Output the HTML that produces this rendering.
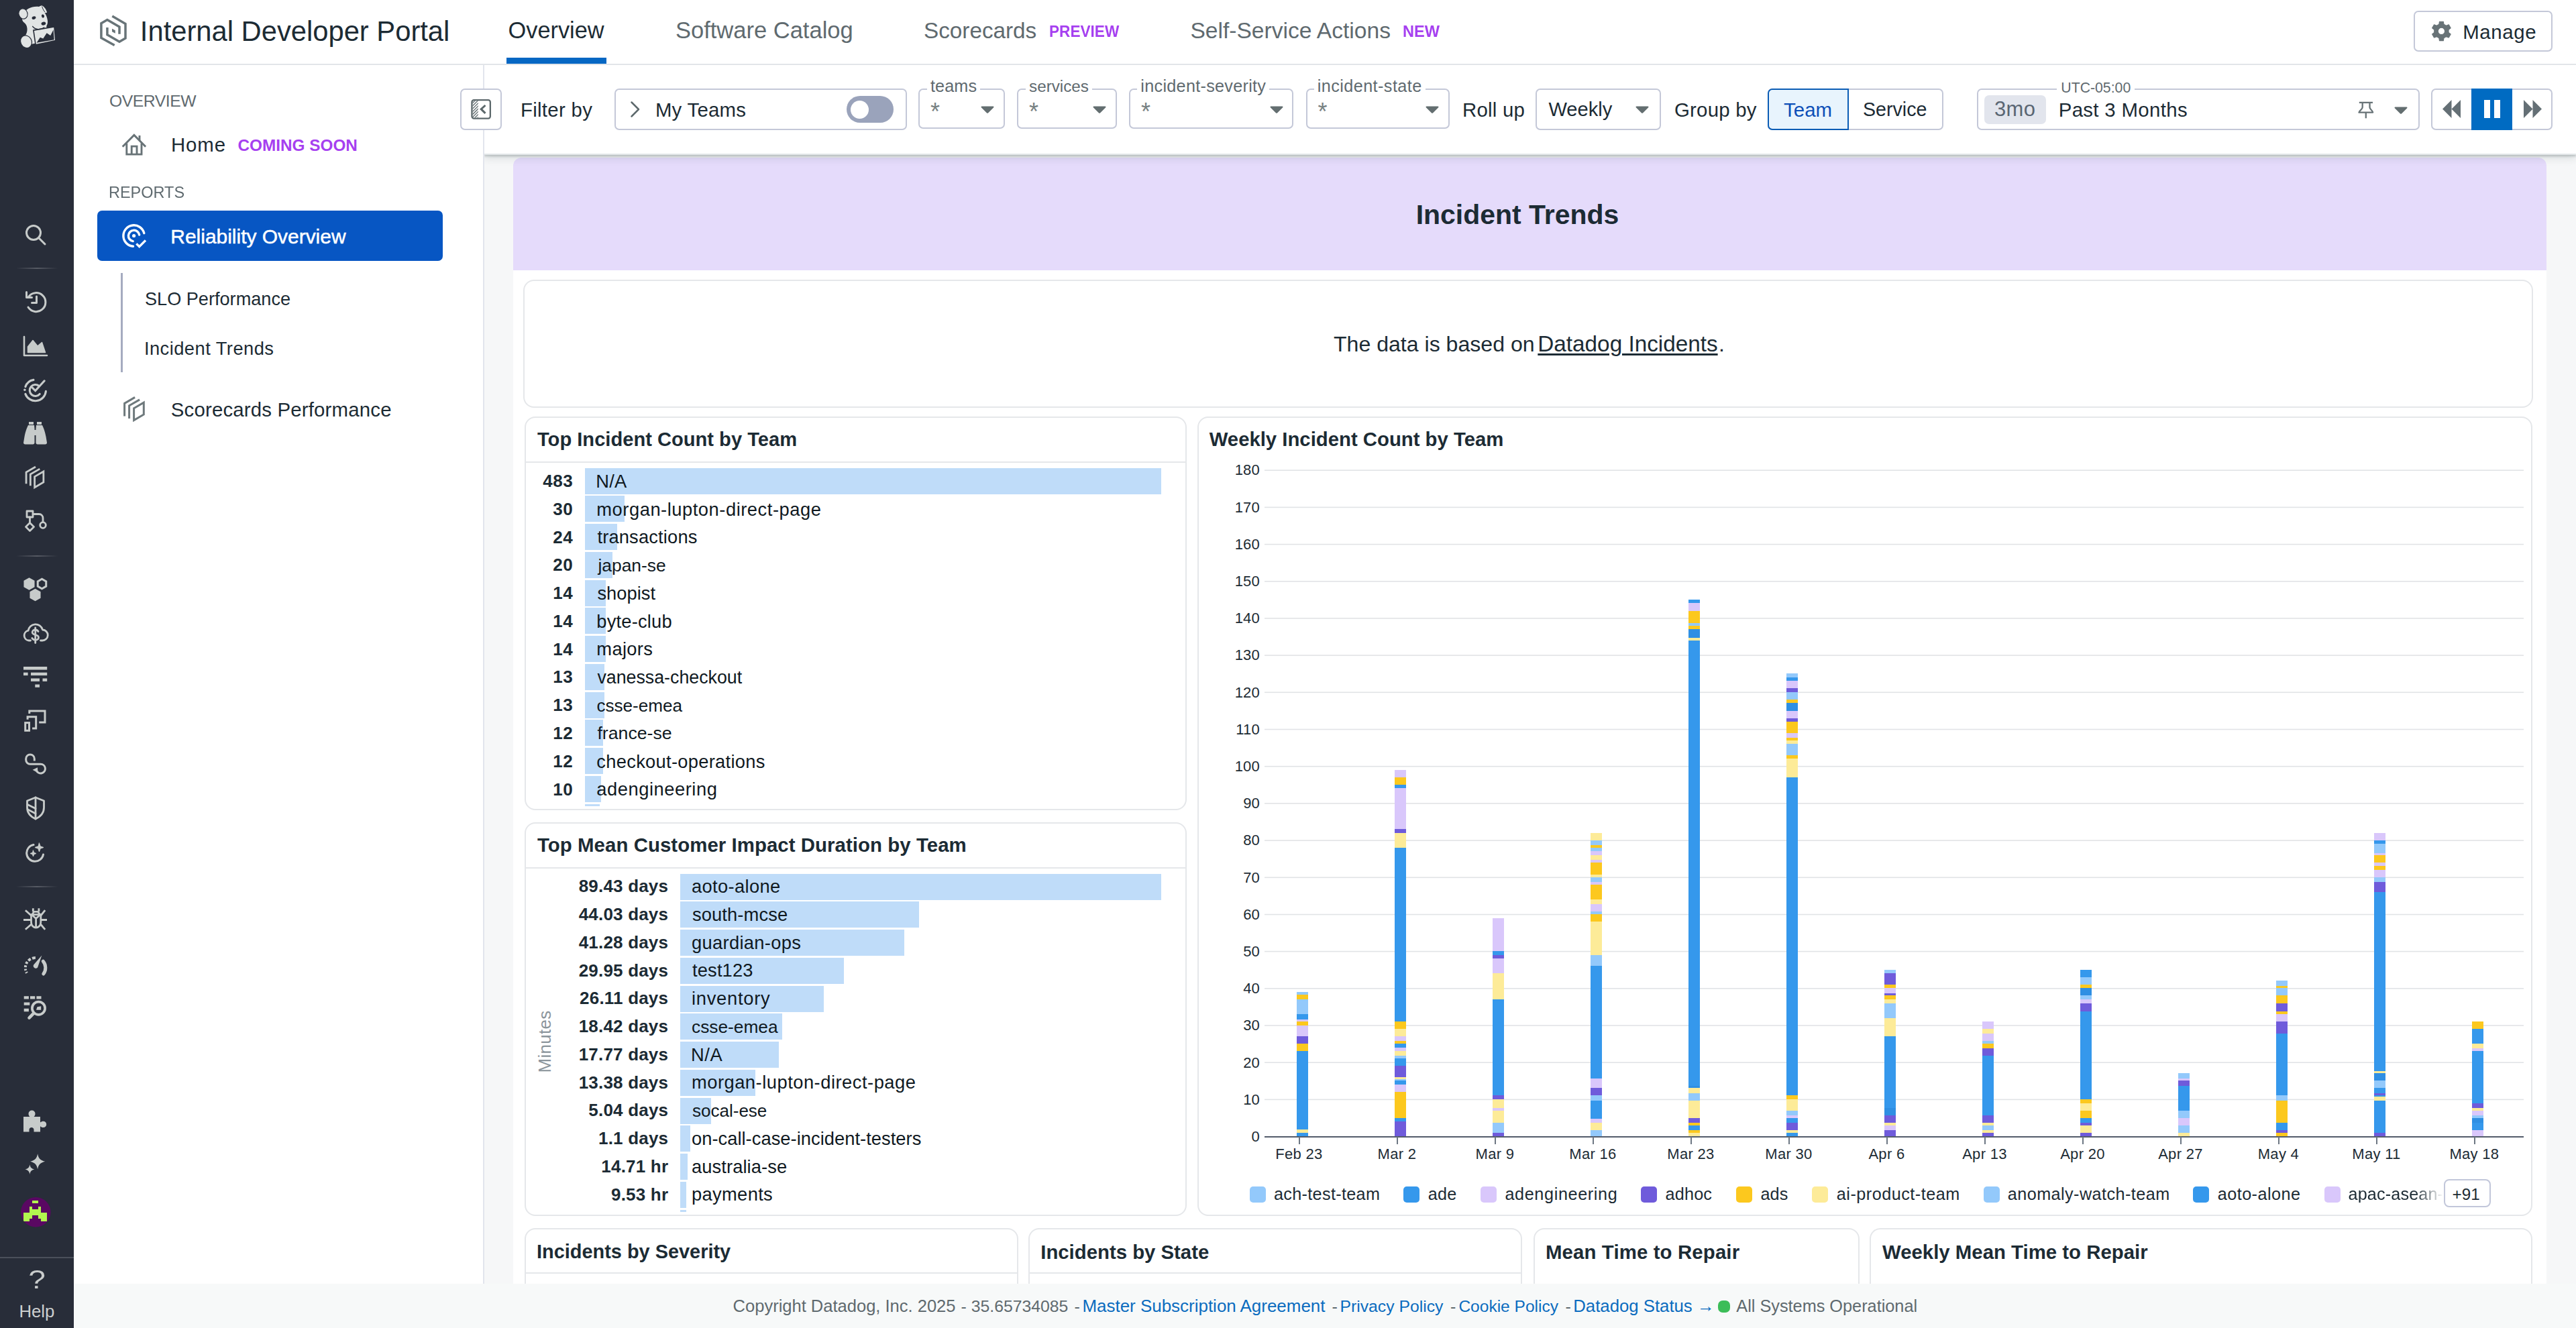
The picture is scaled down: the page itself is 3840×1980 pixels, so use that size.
<!DOCTYPE html>
<html lang="en"><head><meta charset="utf-8"><title>Internal Developer Portal - Reliability Overview</title>
<style>
html,body{margin:0;padding:0;}
body{width:100.000001vw;height:51.562501vw;overflow:hidden;position:relative;background:#f6f7f8;font-family:"Liberation Sans",sans-serif;}
.b{position:absolute;box-sizing:border-box;}
.t{position:absolute;white-space:nowrap;font-family:"Liberation Sans",sans-serif;}
svg{position:absolute;overflow:visible;}
a{color:inherit;}
</style></head>
<body>
<div class="b" style="left:18.802084vw;top:2.500001vw;width:81.197918vw;height:47.343751vw;background:#f6f7f8;"></div>
<div class="b" style="left:19.921876vw;top:6.114584vw;width:78.932293vw;height:44.270834vw;background:#fff;border-radius:0.312501vw 0.312501vw 0 0;"></div>
<div class="b" style="left:19.921876vw;top:6.114584vw;width:78.932293vw;height:4.375001vw;background:#e5dbfb;border-radius:0.312501vw 0.312501vw 0 0;"></div>
<div class="b" style="left:20.312501vw;top:10.859376vw;width:78.020834vw;height:4.973959vw;background:#fff;border:0.052084vw solid #e5e7ea;border-radius:0.416668vw;"></div>
<div class="b" style="left:20.364584vw;top:16.171876vw;width:25.703126vw;height:15.286459vw;background:#fff;border:0.052084vw solid #e5e7ea;border-radius:0.416668vw;"></div>
<div class="b" style="left:20.364584vw;top:17.916668vw;width:25.703126vw;height:0.052084vw;background:#e5e7ea;"></div>
<div class="b" style="left:46.484376vw;top:16.171876vw;width:51.822918vw;height:31.041668vw;background:#fff;border:0.052084vw solid #e5e7ea;border-radius:0.416668vw;"></div>
<div class="b" style="left:20.364584vw;top:31.927084vw;width:25.703126vw;height:15.286459vw;background:#fff;border:0.052084vw solid #e5e7ea;border-radius:0.416668vw;"></div>
<div class="b" style="left:20.364584vw;top:33.671876vw;width:25.703126vw;height:0.052084vw;background:#e5e7ea;"></div>
<div class="b" style="left:20.364584vw;top:47.682293vw;width:19.166668vw;height:5.208334vw;background:#fff;border:0.052084vw solid #e5e7ea;border-radius:0.416668vw;"></div>
<div class="b" style="left:20.364584vw;top:49.401043vw;width:19.166668vw;height:0.052084vw;background:#e5e7ea;"></div>
<div class="b" style="left:39.921876vw;top:47.682293vw;width:19.166668vw;height:5.208334vw;background:#fff;border:0.052084vw solid #e5e7ea;border-radius:0.416668vw;"></div>
<div class="b" style="left:39.921876vw;top:49.401043vw;width:19.166668vw;height:0.052084vw;background:#e5e7ea;"></div>
<div class="b" style="left:59.531251vw;top:47.682293vw;width:12.656251vw;height:5.208334vw;background:#fff;border:0.052084vw solid #e5e7ea;border-radius:0.416668vw;"></div>
<div class="b" style="left:72.578126vw;top:47.682293vw;width:25.729168vw;height:5.208334vw;background:#fff;border:0.052084vw solid #e5e7ea;border-radius:0.416668vw;"></div>
<div class="b" style="left:18.802084vw;top:2.500001vw;width:81.197918vw;height:3.515626vw;background:#fff;border:0 solid #e3e7e9;border-bottom-width:0.052084vw;box-shadow:0 0.052084vw 0.078126vw rgba(60,80,80,0.26),0 0.130209vw 0.312501vw rgba(40,60,60,0.16);"></div>
<div class="b" style="left:2.864584vw;top:2.500001vw;width:15.937501vw;height:47.343751vw;background:#fff;"></div>
<div class="b" style="left:18.750001vw;top:2.500001vw;width:0.052084vw;height:47.343751vw;background:#e2e5ed;"></div>
<div class="b" style="left:2.864584vw;top:0.000001vw;width:97.135418vw;height:2.500001vw;background:#fff;"></div>
<div class="b" style="left:2.864584vw;top:2.468751vw;width:97.135418vw;height:0.052084vw;background:#e2e5e9;"></div>
<div class="b" style="left:17.864584vw;top:3.437501vw;width:1.614584vw;height:1.614584vw;background:#fff;border:0.052084vw solid #c4c8d8;border-radius:0.182293vw;"></div>
<div class="b" style="left:23.854168vw;top:3.437501vw;width:11.354168vw;height:1.614584vw;background:#fff;border:0.052084vw solid #c4c8d8;border-radius:0.182293vw;"></div>
<div class="b" style="left:32.864584vw;top:3.723959vw;width:1.822918vw;height:1.041668vw;background:#9aa3bb;border-radius:0.520834vw;"></div>
<div class="b" style="left:33.007813vw;top:3.893230vw;width:0.703126vw;height:0.703126vw;background:#fff;border-radius:0.364584vw;"></div>
<div class="b" style="left:35.651043vw;top:3.437501vw;width:3.359376vw;height:1.549480vw;background:#fff;border:0.052084vw solid #c4c8d8;border-radius:0.182293vw;"></div>
<div class="b" style="left:39.479168vw;top:3.437501vw;width:3.880209vw;height:1.549480vw;background:#fff;border:0.052084vw solid #c4c8d8;border-radius:0.182293vw;"></div>
<div class="b" style="left:43.828126vw;top:3.437501vw;width:6.380209vw;height:1.549480vw;background:#fff;border:0.052084vw solid #c4c8d8;border-radius:0.182293vw;"></div>
<div class="b" style="left:50.703126vw;top:3.437501vw;width:5.572918vw;height:1.549480vw;background:#fff;border:0.052084vw solid #c4c8d8;border-radius:0.182293vw;"></div>
<div class="b" style="left:59.609376vw;top:3.437501vw;width:4.869793vw;height:1.614584vw;background:#fff;border:0.052084vw solid #c4c8d8;border-radius:0.182293vw;"></div>
<div class="b" style="left:68.619793vw;top:3.437501vw;width:6.822918vw;height:1.614584vw;background:#fff;border:0.052084vw solid #c4c8d8;border-radius:0.182293vw;"></div>
<div class="b" style="left:68.619793vw;top:3.437501vw;width:3.151043vw;height:1.614584vw;background:#e8f4fd;border:0.065105vw solid #0b5cb5;border-radius:0.182293vw 0 0 0.182293vw;"></div>
<div class="b" style="left:76.744793vw;top:3.437501vw;width:17.187501vw;height:1.614584vw;background:#fff;border:0.052084vw solid #c4c8d8;border-radius:0.182293vw;"></div>
<div class="b" style="left:77.031251vw;top:3.684897vw;width:2.395834vw;height:1.119793vw;background:#e2e5ed;border-radius:0.182293vw;"></div>
<div class="b" style="left:94.375001vw;top:3.437501vw;width:4.713543vw;height:1.614584vw;background:#fff;border:0.052084vw solid #c4c8d8;border-radius:0.182293vw;"></div>
<div class="b" style="left:95.937501vw;top:3.437501vw;width:1.588543vw;height:1.614584vw;background:#006bc2;"></div>
<div class="b" style="left:96.419272vw;top:3.880209vw;width:0.234376vw;height:0.703126vw;background:#fff;"></div>
<div class="b" style="left:96.809897vw;top:3.880209vw;width:0.234376vw;height:0.703126vw;background:#fff;"></div>
<div class="b" style="left:93.705730vw;top:0.421876vw;width:5.377605vw;height:1.575522vw;background:#fff;border:0.052084vw solid #c4c8d8;border-radius:0.182293vw;"></div>
<div class="b" style="left:19.661459vw;top:2.239584vw;width:3.880209vw;height:0.234376vw;background:#0667c3;"></div>
<div class="b" style="left:3.776043vw;top:8.177084vw;width:13.411459vw;height:1.953126vw;background:#0756c3;border-radius:0.182293vw;"></div>
<div class="b" style="left:4.687501vw;top:10.598959vw;width:0.078126vw;height:3.854168vw;background:#a5abc0;"></div>
<div class="b" style="left:2.864584vw;top:49.843751vw;width:97.135418vw;height:1.718751vw;background:#f7f9f9;"></div>
<div class="b" style="left:66.692709vw;top:50.481772vw;width:0.468751vw;height:0.468751vw;background:#3cbd58;border-radius:0.182293vw;"></div>
<div class="b" style="left:0.000001vw;top:0.000001vw;width:2.864584vw;height:51.562501vw;background:#282d39;"></div>
<div class="b" style="left:0.000001vw;top:48.802084vw;width:2.864584vw;height:0.052084vw;background:#4b505b;"></div>
<div class="b" style="left:0.625001vw;top:10.390626vw;width:1.614584vw;height:0.052084vw;background:linear-gradient(90deg,rgba(255,255,255,0),rgba(255,255,255,0.22),rgba(255,255,255,0));"></div>
<div class="b" style="left:0.625001vw;top:21.562501vw;width:1.614584vw;height:0.052084vw;background:linear-gradient(90deg,rgba(255,255,255,0),rgba(255,255,255,0.22),rgba(255,255,255,0));"></div>
<div class="b" style="left:0.625001vw;top:34.401043vw;width:1.614584vw;height:0.052084vw;background:linear-gradient(90deg,rgba(255,255,255,0),rgba(255,255,255,0.22),rgba(255,255,255,0));"></div>
<div class="b" style="left:22.708334vw;top:18.164063vw;width:22.369793vw;height:1.015626vw;background:#bfdcf9;"></div>
<div class="b" style="left:22.708334vw;top:19.250001vw;width:1.536459vw;height:1.015626vw;background:#bfdcf9;"></div>
<div class="b" style="left:22.708334vw;top:20.338543vw;width:1.260418vw;height:1.015626vw;background:#bfdcf9;"></div>
<div class="b" style="left:22.708334vw;top:21.427084vw;width:1.075522vw;height:1.015626vw;background:#bfdcf9;"></div>
<div class="b" style="left:22.708334vw;top:22.513022vw;width:0.799480vw;height:1.015626vw;background:#bfdcf9;"></div>
<div class="b" style="left:22.708334vw;top:23.598959vw;width:0.799480vw;height:1.015626vw;background:#bfdcf9;"></div>
<div class="b" style="left:22.708334vw;top:24.687501vw;width:0.799480vw;height:1.015626vw;background:#bfdcf9;"></div>
<div class="b" style="left:22.708334vw;top:25.776043vw;width:0.755209vw;height:1.015626vw;background:#bfdcf9;"></div>
<div class="b" style="left:22.708334vw;top:26.861980vw;width:0.755209vw;height:1.015626vw;background:#bfdcf9;"></div>
<div class="b" style="left:22.708334vw;top:27.947918vw;width:0.708334vw;height:1.015626vw;background:#bfdcf9;"></div>
<div class="b" style="left:22.708334vw;top:29.036459vw;width:0.708334vw;height:1.015626vw;background:#bfdcf9;"></div>
<div class="b" style="left:22.708334vw;top:30.125001vw;width:0.617188vw;height:1.015626vw;background:#bfdcf9;"></div>
<div class="b" style="left:22.708334vw;top:31.213543vw;width:0.572918vw;height:0.078126vw;background:#bfdcf9;"></div>
<div class="b" style="left:26.406251vw;top:33.919272vw;width:18.671876vw;height:1.015626vw;background:#bfdcf9;"></div>
<div class="b" style="left:26.406251vw;top:35.005209vw;width:9.270834vw;height:1.015626vw;background:#bfdcf9;"></div>
<div class="b" style="left:26.406251vw;top:36.093751vw;width:8.703126vw;height:1.015626vw;background:#bfdcf9;"></div>
<div class="b" style="left:26.406251vw;top:37.182293vw;width:6.356772vw;height:1.015626vw;background:#bfdcf9;"></div>
<div class="b" style="left:26.406251vw;top:38.268230vw;width:5.562501vw;height:1.015626vw;background:#bfdcf9;"></div>
<div class="b" style="left:26.406251vw;top:39.354168vw;width:3.968751vw;height:1.015626vw;background:#bfdcf9;"></div>
<div class="b" style="left:26.406251vw;top:40.442709vw;width:3.835939vw;height:1.015626vw;background:#bfdcf9;"></div>
<div class="b" style="left:26.406251vw;top:41.531251vw;width:2.927084vw;height:1.015626vw;background:#bfdcf9;"></div>
<div class="b" style="left:26.406251vw;top:42.617188vw;width:1.200522vw;height:1.015626vw;background:#bfdcf9;"></div>
<div class="b" style="left:26.406251vw;top:43.703126vw;width:0.382813vw;height:1.015626vw;background:#bfdcf9;"></div>
<div class="b" style="left:26.406251vw;top:44.791668vw;width:0.283855vw;height:1.015626vw;background:#bfdcf9;"></div>
<div class="b" style="left:26.406251vw;top:45.880209vw;width:0.239584vw;height:1.015626vw;background:#bfdcf9;"></div>
<div class="b" style="left:26.406251vw;top:46.966147vw;width:0.234376vw;height:0.078126vw;background:#bfdcf9;"></div>
<svg style="left:0;top:0;width:100.000001vw;height:51.562501vw" viewBox="0 0 3840 1980" shape-rendering="crispEdges"><rect x="1885" y="1638.6" width="1877" height="1.600" fill="#e1e3e6" shape-rendering="geometricPrecision"/><rect x="1885" y="1583.4" width="1877" height="1.600" fill="#e1e3e6" shape-rendering="geometricPrecision"/><rect x="1885" y="1528.2" width="1877" height="1.600" fill="#e1e3e6" shape-rendering="geometricPrecision"/><rect x="1885" y="1473.0" width="1877" height="1.600" fill="#e1e3e6" shape-rendering="geometricPrecision"/><rect x="1885" y="1417.8" width="1877" height="1.600" fill="#e1e3e6" shape-rendering="geometricPrecision"/><rect x="1885" y="1362.7" width="1877" height="1.600" fill="#e1e3e6" shape-rendering="geometricPrecision"/><rect x="1885" y="1307.5" width="1877" height="1.600" fill="#e1e3e6" shape-rendering="geometricPrecision"/><rect x="1885" y="1252.3" width="1877" height="1.600" fill="#e1e3e6" shape-rendering="geometricPrecision"/><rect x="1885" y="1197.1" width="1877" height="1.600" fill="#e1e3e6" shape-rendering="geometricPrecision"/><rect x="1885" y="1141.9" width="1877" height="1.600" fill="#e1e3e6" shape-rendering="geometricPrecision"/><rect x="1885" y="1086.7" width="1877" height="1.600" fill="#e1e3e6" shape-rendering="geometricPrecision"/><rect x="1885" y="1031.5" width="1877" height="1.600" fill="#e1e3e6" shape-rendering="geometricPrecision"/><rect x="1885" y="976.3" width="1877" height="1.600" fill="#e1e3e6" shape-rendering="geometricPrecision"/><rect x="1885" y="921.1" width="1877" height="1.600" fill="#e1e3e6" shape-rendering="geometricPrecision"/><rect x="1885" y="866.0" width="1877" height="1.600" fill="#e1e3e6" shape-rendering="geometricPrecision"/><rect x="1885" y="810.8" width="1877" height="1.600" fill="#e1e3e6" shape-rendering="geometricPrecision"/><rect x="1885" y="755.6" width="1877" height="1.600" fill="#e1e3e6" shape-rendering="geometricPrecision"/><rect x="1885" y="700.4" width="1877" height="1.600" fill="#e1e3e6" shape-rendering="geometricPrecision"/><rect x="1932.5" y="1688.68" width="17" height="5.52" fill="#3598ec"/><rect x="1932.5" y="1684.27" width="17" height="4.42" fill="#fdeb98"/><rect x="1932.5" y="1567.26" width="17" height="117.00" fill="#3598ec"/><rect x="1932.5" y="1556.23" width="17" height="11.04" fill="#fcc81e"/><rect x="1932.5" y="1545.19" width="17" height="11.04" fill="#6f5bdb"/><rect x="1932.5" y="1528.63" width="17" height="16.56" fill="#d9c7fb"/><rect x="1932.5" y="1523.11" width="17" height="5.52" fill="#fcc81e"/><rect x="1932.5" y="1519.80" width="17" height="3.31" fill="#d9c7fb"/><rect x="1932.5" y="1512.07" width="17" height="7.73" fill="#3598ec"/><rect x="1932.5" y="1490.00" width="17" height="22.08" fill="#93c9fb"/><rect x="1932.5" y="1482.82" width="17" height="7.17" fill="#fcc81e"/><rect x="1932.5" y="1478.96" width="17" height="3.86" fill="#93c9fb"/><rect x="2078.5" y="1672.12" width="17" height="22.08" fill="#6f5bdb"/><rect x="2078.5" y="1666.61" width="17" height="5.52" fill="#3598ec"/><rect x="2078.5" y="1627.97" width="17" height="38.63" fill="#fcc81e"/><rect x="2078.5" y="1616.93" width="17" height="11.04" fill="#d9c7fb"/><rect x="2078.5" y="1611.41" width="17" height="5.52" fill="#3598ec"/><rect x="2078.5" y="1608.66" width="17" height="2.76" fill="#93c9fb"/><rect x="2078.5" y="1605.90" width="17" height="2.76" fill="#fdeb98"/><rect x="2078.5" y="1589.34" width="17" height="16.56" fill="#6f5bdb"/><rect x="2078.5" y="1578.30" width="17" height="11.04" fill="#3598ec"/><rect x="2078.5" y="1574.44" width="17" height="3.86" fill="#93c9fb"/><rect x="2078.5" y="1567.26" width="17" height="7.17" fill="#fdeb98"/><rect x="2078.5" y="1561.74" width="17" height="5.52" fill="#d9c7fb"/><rect x="2078.5" y="1556.23" width="17" height="5.52" fill="#3598ec"/><rect x="2078.5" y="1552.36" width="17" height="3.86" fill="#fcc81e"/><rect x="2078.5" y="1545.19" width="17" height="7.17" fill="#d9c7fb"/><rect x="2078.5" y="1534.15" width="17" height="11.04" fill="#fdeb98"/><rect x="2078.5" y="1523.11" width="17" height="11.04" fill="#fcc81e"/><rect x="2078.5" y="1263.72" width="17" height="259.39" fill="#3598ec"/><rect x="2078.5" y="1241.64" width="17" height="22.08" fill="#fdeb98"/><rect x="2078.5" y="1236.12" width="17" height="5.52" fill="#6f5bdb"/><rect x="2078.5" y="1175.41" width="17" height="60.71" fill="#d9c7fb"/><rect x="2078.5" y="1169.89" width="17" height="5.52" fill="#3598ec"/><rect x="2078.5" y="1158.86" width="17" height="11.04" fill="#fcc81e"/><rect x="2078.5" y="1147.82" width="17" height="11.04" fill="#d9c7fb"/><rect x="2224.5" y="1688.68" width="17" height="5.52" fill="#6f5bdb"/><rect x="2224.5" y="1673.78" width="17" height="14.90" fill="#93c9fb"/><rect x="2224.5" y="1655.57" width="17" height="18.21" fill="#fdeb98"/><rect x="2224.5" y="1651.70" width="17" height="3.86" fill="#d9c7fb"/><rect x="2224.5" y="1639.01" width="17" height="12.69" fill="#fdeb98"/><rect x="2224.5" y="1633.49" width="17" height="5.52" fill="#6f5bdb"/><rect x="2224.5" y="1490.00" width="17" height="143.49" fill="#3598ec"/><rect x="2224.5" y="1451.36" width="17" height="38.63" fill="#fdeb98"/><rect x="2224.5" y="1429.29" width="17" height="22.08" fill="#d9c7fb"/><rect x="2224.5" y="1423.77" width="17" height="5.52" fill="#6f5bdb"/><rect x="2224.5" y="1418.25" width="17" height="5.52" fill="#3598ec"/><rect x="2224.5" y="1368.58" width="17" height="49.67" fill="#d9c7fb"/><rect x="2370.5" y="1684.82" width="17" height="9.38" fill="#93c9fb"/><rect x="2370.5" y="1673.78" width="17" height="11.04" fill="#fdeb98"/><rect x="2370.5" y="1668.26" width="17" height="5.52" fill="#d9c7fb"/><rect x="2370.5" y="1640.67" width="17" height="27.60" fill="#3598ec"/><rect x="2370.5" y="1633.49" width="17" height="7.17" fill="#93c9fb"/><rect x="2370.5" y="1622.45" width="17" height="11.04" fill="#6f5bdb"/><rect x="2370.5" y="1607.55" width="17" height="14.90" fill="#d9c7fb"/><rect x="2370.5" y="1440.33" width="17" height="167.23" fill="#3598ec"/><rect x="2370.5" y="1423.77" width="17" height="16.56" fill="#93c9fb"/><rect x="2370.5" y="1374.10" width="17" height="49.67" fill="#fdeb98"/><rect x="2370.5" y="1363.06" width="17" height="11.04" fill="#fcc81e"/><rect x="2370.5" y="1359.20" width="17" height="3.86" fill="#93c9fb"/><rect x="2370.5" y="1348.16" width="17" height="11.04" fill="#d9c7fb"/><rect x="2370.5" y="1340.98" width="17" height="7.17" fill="#fdeb98"/><rect x="2370.5" y="1318.91" width="17" height="22.08" fill="#fcc81e"/><rect x="2370.5" y="1315.04" width="17" height="3.86" fill="#d9c7fb"/><rect x="2370.5" y="1307.87" width="17" height="7.17" fill="#93c9fb"/><rect x="2370.5" y="1304.01" width="17" height="3.86" fill="#fdeb98"/><rect x="2370.5" y="1285.79" width="17" height="18.21" fill="#fcc81e"/><rect x="2370.5" y="1281.93" width="17" height="3.86" fill="#d9c7fb"/><rect x="2370.5" y="1274.76" width="17" height="7.17" fill="#fdeb98"/><rect x="2370.5" y="1269.24" width="17" height="5.52" fill="#d9c7fb"/><rect x="2370.5" y="1263.72" width="17" height="5.52" fill="#93c9fb"/><rect x="2370.5" y="1259.85" width="17" height="3.86" fill="#fcc81e"/><rect x="2370.5" y="1252.68" width="17" height="7.17" fill="#93c9fb"/><rect x="2370.5" y="1241.64" width="17" height="11.04" fill="#fdeb98"/><rect x="2516.5" y="1688.68" width="17" height="5.52" fill="#fdeb98"/><rect x="2516.5" y="1684.82" width="17" height="3.86" fill="#fcc81e"/><rect x="2516.5" y="1677.64" width="17" height="7.17" fill="#3598ec"/><rect x="2516.5" y="1673.78" width="17" height="3.86" fill="#fcc81e"/><rect x="2516.5" y="1666.61" width="17" height="7.17" fill="#6f5bdb"/><rect x="2516.5" y="1640.67" width="17" height="25.94" fill="#fdeb98"/><rect x="2516.5" y="1629.63" width="17" height="11.04" fill="#93c9fb"/><rect x="2516.5" y="1622.45" width="17" height="7.17" fill="#fdeb98"/><rect x="2516.5" y="1618.59" width="17" height="3.86" fill="#2f8fe3"/><rect x="2516.5" y="954.65" width="17" height="663.94" fill="#3598ec"/><rect x="2516.5" y="950.79" width="17" height="3.86" fill="#fdeb98"/><rect x="2516.5" y="938.10" width="17" height="12.69" fill="#2f8fe3"/><rect x="2516.5" y="932.58" width="17" height="5.52" fill="#fcc81e"/><rect x="2516.5" y="928.71" width="17" height="3.86" fill="#93c9fb"/><rect x="2516.5" y="910.50" width="17" height="18.21" fill="#fcc81e"/><rect x="2516.5" y="899.46" width="17" height="11.04" fill="#d9c7fb"/><rect x="2516.5" y="893.95" width="17" height="5.52" fill="#3598ec"/><rect x="2662.5" y="1688.68" width="17" height="5.52" fill="#3598ec"/><rect x="2662.5" y="1684.82" width="17" height="3.86" fill="#fdeb98"/><rect x="2662.5" y="1673.78" width="17" height="11.04" fill="#6f5bdb"/><rect x="2662.5" y="1666.61" width="17" height="7.17" fill="#3598ec"/><rect x="2662.5" y="1662.74" width="17" height="3.86" fill="#d9c7fb"/><rect x="2662.5" y="1655.57" width="17" height="7.17" fill="#93c9fb"/><rect x="2662.5" y="1639.01" width="17" height="16.56" fill="#fdeb98"/><rect x="2662.5" y="1633.49" width="17" height="5.52" fill="#fcc81e"/><rect x="2662.5" y="1158.86" width="17" height="474.63" fill="#3598ec"/><rect x="2662.5" y="1131.26" width="17" height="27.59" fill="#fdeb98"/><rect x="2662.5" y="1125.74" width="17" height="5.52" fill="#fcc81e"/><rect x="2662.5" y="1109.19" width="17" height="16.56" fill="#93c9fb"/><rect x="2662.5" y="1103.67" width="17" height="5.52" fill="#fdeb98"/><rect x="2662.5" y="1099.80" width="17" height="3.86" fill="#fcc81e"/><rect x="2662.5" y="1092.63" width="17" height="7.17" fill="#d9c7fb"/><rect x="2662.5" y="1076.07" width="17" height="16.56" fill="#fcc81e"/><rect x="2662.5" y="1070.55" width="17" height="5.52" fill="#6f5bdb"/><rect x="2662.5" y="1059.51" width="17" height="11.04" fill="#d9c7fb"/><rect x="2662.5" y="1048.48" width="17" height="11.04" fill="#2f8fe3"/><rect x="2662.5" y="1042.96" width="17" height="5.52" fill="#fcc81e"/><rect x="2662.5" y="1031.92" width="17" height="11.04" fill="#93c9fb"/><rect x="2662.5" y="1026.40" width="17" height="5.52" fill="#6f5bdb"/><rect x="2662.5" y="1015.36" width="17" height="11.04" fill="#d9c7fb"/><rect x="2662.5" y="1009.84" width="17" height="5.52" fill="#3598ec"/><rect x="2662.5" y="1004.33" width="17" height="5.52" fill="#93c9fb"/><rect x="2808.5" y="1684.82" width="17" height="9.38" fill="#6f5bdb"/><rect x="2808.5" y="1677.64" width="17" height="7.17" fill="#d9c7fb"/><rect x="2808.5" y="1673.78" width="17" height="3.86" fill="#fdeb98"/><rect x="2808.5" y="1662.74" width="17" height="11.04" fill="#6f5bdb"/><rect x="2808.5" y="1651.70" width="17" height="11.04" fill="#2f8fe3"/><rect x="2808.5" y="1545.19" width="17" height="106.52" fill="#3598ec"/><rect x="2808.5" y="1517.59" width="17" height="27.60" fill="#fdeb98"/><rect x="2808.5" y="1495.52" width="17" height="22.08" fill="#93c9fb"/><rect x="2808.5" y="1490.00" width="17" height="5.52" fill="#fdeb98"/><rect x="2808.5" y="1484.48" width="17" height="5.52" fill="#fcc81e"/><rect x="2808.5" y="1480.61" width="17" height="3.86" fill="#6f5bdb"/><rect x="2808.5" y="1473.44" width="17" height="7.17" fill="#d9c7fb"/><rect x="2808.5" y="1467.92" width="17" height="5.52" fill="#fcc81e"/><rect x="2808.5" y="1451.36" width="17" height="16.56" fill="#6f5bdb"/><rect x="2808.5" y="1445.85" width="17" height="5.52" fill="#93c9fb"/><rect x="2954.5" y="1688.68" width="17" height="5.52" fill="#6f5bdb"/><rect x="2954.5" y="1684.82" width="17" height="3.86" fill="#fdeb98"/><rect x="2954.5" y="1677.64" width="17" height="7.17" fill="#93c9fb"/><rect x="2954.5" y="1673.78" width="17" height="3.86" fill="#fdeb98"/><rect x="2954.5" y="1662.74" width="17" height="11.04" fill="#6f5bdb"/><rect x="2954.5" y="1574.44" width="17" height="88.30" fill="#3598ec"/><rect x="2954.5" y="1563.40" width="17" height="11.04" fill="#6f5bdb"/><rect x="2954.5" y="1556.23" width="17" height="7.17" fill="#fcc81e"/><rect x="2954.5" y="1552.36" width="17" height="3.86" fill="#93c9fb"/><rect x="2954.5" y="1541.32" width="17" height="11.04" fill="#d9c7fb"/><rect x="2954.5" y="1534.15" width="17" height="7.17" fill="#fdeb98"/><rect x="2954.5" y="1523.11" width="17" height="11.04" fill="#d9c7fb"/><rect x="3100.5" y="1688.68" width="17" height="5.52" fill="#6f5bdb"/><rect x="3100.5" y="1677.64" width="17" height="11.04" fill="#fdeb98"/><rect x="3100.5" y="1673.78" width="17" height="3.86" fill="#6f5bdb"/><rect x="3100.5" y="1666.61" width="17" height="7.17" fill="#3598ec"/><rect x="3100.5" y="1655.57" width="17" height="11.04" fill="#fcc81e"/><rect x="3100.5" y="1644.53" width="17" height="11.04" fill="#fdeb98"/><rect x="3100.5" y="1639.01" width="17" height="5.52" fill="#fcc81e"/><rect x="3100.5" y="1508.21" width="17" height="130.80" fill="#3598ec"/><rect x="3100.5" y="1495.52" width="17" height="12.69" fill="#6f5bdb"/><rect x="3100.5" y="1490.00" width="17" height="5.52" fill="#d9c7fb"/><rect x="3100.5" y="1484.48" width="17" height="5.52" fill="#93c9fb"/><rect x="3100.5" y="1473.44" width="17" height="11.04" fill="#2f8fe3"/><rect x="3100.5" y="1467.92" width="17" height="5.52" fill="#fcc81e"/><rect x="3100.5" y="1456.88" width="17" height="11.04" fill="#93c9fb"/><rect x="3100.5" y="1445.85" width="17" height="11.04" fill="#3598ec"/><rect x="3246.5" y="1688.68" width="17" height="5.52" fill="#fdeb98"/><rect x="3246.5" y="1677.64" width="17" height="11.04" fill="#93c9fb"/><rect x="3246.5" y="1666.61" width="17" height="11.04" fill="#d9c7fb"/><rect x="3246.5" y="1655.57" width="17" height="11.04" fill="#93c9fb"/><rect x="3246.5" y="1618.59" width="17" height="36.98" fill="#3598ec"/><rect x="3246.5" y="1611.41" width="17" height="7.17" fill="#6f5bdb"/><rect x="3246.5" y="1607.55" width="17" height="3.86" fill="#d9c7fb"/><rect x="3246.5" y="1600.38" width="17" height="7.17" fill="#93c9fb"/><rect x="3392.5" y="1688.68" width="17" height="5.52" fill="#fcc81e"/><rect x="3392.5" y="1684.82" width="17" height="3.86" fill="#6f5bdb"/><rect x="3392.5" y="1673.78" width="17" height="11.04" fill="#3598ec"/><rect x="3392.5" y="1640.67" width="17" height="33.11" fill="#fcc81e"/><rect x="3392.5" y="1633.49" width="17" height="7.17" fill="#93c9fb"/><rect x="3392.5" y="1541.32" width="17" height="92.17" fill="#3598ec"/><rect x="3392.5" y="1523.11" width="17" height="18.21" fill="#6f5bdb"/><rect x="3392.5" y="1512.07" width="17" height="11.04" fill="#d9c7fb"/><rect x="3392.5" y="1508.21" width="17" height="3.86" fill="#fcc81e"/><rect x="3392.5" y="1495.52" width="17" height="12.69" fill="#6f5bdb"/><rect x="3392.5" y="1484.48" width="17" height="11.04" fill="#fcc81e"/><rect x="3392.5" y="1473.44" width="17" height="11.04" fill="#93c9fb"/><rect x="3392.5" y="1469.58" width="17" height="3.86" fill="#fcc81e"/><rect x="3392.5" y="1462.40" width="17" height="7.17" fill="#93c9fb"/><rect x="3538.5" y="1688.68" width="17" height="5.52" fill="#6f5bdb"/><rect x="3538.5" y="1640.67" width="17" height="48.02" fill="#3598ec"/><rect x="3538.5" y="1635.15" width="17" height="5.52" fill="#fdeb98"/><rect x="3538.5" y="1633.49" width="17" height="1.66" fill="#3598ec"/><rect x="3538.5" y="1629.63" width="17" height="3.86" fill="#6f5bdb"/><rect x="3538.5" y="1622.45" width="17" height="7.17" fill="#3598ec"/><rect x="3538.5" y="1611.41" width="17" height="11.04" fill="#93c9fb"/><rect x="3538.5" y="1600.38" width="17" height="11.04" fill="#2f8fe3"/><rect x="3538.5" y="1596.51" width="17" height="3.86" fill="#fdeb98"/><rect x="3538.5" y="1329.95" width="17" height="266.57" fill="#3598ec"/><rect x="3538.5" y="1315.04" width="17" height="14.90" fill="#6f5bdb"/><rect x="3538.5" y="1307.87" width="17" height="7.17" fill="#93c9fb"/><rect x="3538.5" y="1296.83" width="17" height="11.04" fill="#d9c7fb"/><rect x="3538.5" y="1291.31" width="17" height="5.52" fill="#fcc81e"/><rect x="3538.5" y="1285.79" width="17" height="5.52" fill="#d9c7fb"/><rect x="3538.5" y="1274.76" width="17" height="11.04" fill="#fcc81e"/><rect x="3538.5" y="1272.00" width="17" height="2.76" fill="#d9c7fb"/><rect x="3538.5" y="1258.20" width="17" height="13.80" fill="#93c9fb"/><rect x="3538.5" y="1252.68" width="17" height="5.52" fill="#3598ec"/><rect x="3538.5" y="1241.64" width="17" height="11.04" fill="#d9c7fb"/><rect x="3684.5" y="1684.82" width="17" height="9.38" fill="#d9c7fb"/><rect x="3684.5" y="1673.78" width="17" height="11.04" fill="#3598ec"/><rect x="3684.5" y="1666.61" width="17" height="7.17" fill="#2f8fe3"/><rect x="3684.5" y="1662.74" width="17" height="3.86" fill="#93c9fb"/><rect x="3684.5" y="1655.57" width="17" height="7.17" fill="#d9c7fb"/><rect x="3684.5" y="1651.70" width="17" height="3.86" fill="#fdeb98"/><rect x="3684.5" y="1644.53" width="17" height="7.17" fill="#6f5bdb"/><rect x="3684.5" y="1567.26" width="17" height="77.27" fill="#3598ec"/><rect x="3684.5" y="1563.40" width="17" height="3.86" fill="#d9c7fb"/><rect x="3684.5" y="1556.23" width="17" height="7.17" fill="#fdeb98"/><rect x="3684.5" y="1534.15" width="17" height="22.08" fill="#3598ec"/><rect x="3684.5" y="1523.11" width="17" height="11.04" fill="#fcc81e"/><rect x="1885" y="1693.7" width="1877" height="2.300" fill="#535c6b"/><rect x="1935.5" y="1695.2" width="2" height="10.500" fill="#6d7783"/><rect x="2081.5" y="1695.2" width="2" height="10.500" fill="#6d7783"/><rect x="2227.5" y="1695.2" width="2" height="10.500" fill="#6d7783"/><rect x="2373.5" y="1695.2" width="2" height="10.500" fill="#6d7783"/><rect x="2519.5" y="1695.2" width="2" height="10.500" fill="#6d7783"/><rect x="2665.5" y="1695.2" width="2" height="10.500" fill="#6d7783"/><rect x="2811.5" y="1695.2" width="2" height="10.500" fill="#6d7783"/><rect x="2957.5" y="1695.2" width="2" height="10.500" fill="#6d7783"/><rect x="3103.5" y="1695.2" width="2" height="10.500" fill="#6d7783"/><rect x="3249.5" y="1695.2" width="2" height="10.500" fill="#6d7783"/><rect x="3395.5" y="1695.2" width="2" height="10.500" fill="#6d7783"/><rect x="3541.5" y="1695.2" width="2" height="10.500" fill="#6d7783"/><rect x="3687.5" y="1695.2" width="2" height="10.500" fill="#6d7783"/></svg>
<div class="b" style="left:48.515626vw;top:46.067709vw;width:0.625001vw;height:0.625001vw;background:#93c9fb;border-radius:0.130209vw;"></div>
<div class="b" style="left:54.466147vw;top:46.067709vw;width:0.625001vw;height:0.625001vw;background:#3598ec;border-radius:0.130209vw;"></div>
<div class="b" style="left:57.473959vw;top:46.067709vw;width:0.625001vw;height:0.625001vw;background:#d9c7fb;border-radius:0.130209vw;"></div>
<div class="b" style="left:63.697918vw;top:46.067709vw;width:0.625001vw;height:0.625001vw;background:#6f5bdb;border-radius:0.130209vw;"></div>
<div class="b" style="left:67.395834vw;top:46.067709vw;width:0.625001vw;height:0.625001vw;background:#fcc81e;border-radius:0.130209vw;"></div>
<div class="b" style="left:70.325522vw;top:46.067709vw;width:0.625001vw;height:0.625001vw;background:#fdeb98;border-radius:0.130209vw;"></div>
<div class="b" style="left:76.992188vw;top:46.067709vw;width:0.625001vw;height:0.625001vw;background:#93c9fb;border-radius:0.130209vw;"></div>
<div class="b" style="left:85.130209vw;top:46.067709vw;width:0.625001vw;height:0.625001vw;background:#3598ec;border-radius:0.130209vw;"></div>
<div class="b" style="left:90.221355vw;top:46.067709vw;width:0.625001vw;height:0.625001vw;background:#d9c7fb;border-radius:0.130209vw;"></div>
<div class="b" style="left:94.861980vw;top:45.770834vw;width:1.838543vw;height:1.114584vw;background:#fff;border:0.052084vw solid #c2c7da;border-radius:0.208334vw;"></div>
<svg style="left:38.072918vw;top:4.114584vw;width:0.520834vw;height:0.286459vw" viewBox="0 0 20 11"><path d="M1.5 0.5h17a1 1 0 0 1 .7 1.7l-8 8a1.7 1.7 0 0 1-2.4 0l-8-8A1 1 0 0 1 1.5.5z" fill="#636e70"/></svg>
<svg style="left:42.421876vw;top:4.114584vw;width:0.520834vw;height:0.286459vw" viewBox="0 0 20 11"><path d="M1.5 0.5h17a1 1 0 0 1 .7 1.7l-8 8a1.7 1.7 0 0 1-2.4 0l-8-8A1 1 0 0 1 1.5.5z" fill="#636e70"/></svg>
<svg style="left:49.296876vw;top:4.114584vw;width:0.520834vw;height:0.286459vw" viewBox="0 0 20 11"><path d="M1.5 0.5h17a1 1 0 0 1 .7 1.7l-8 8a1.7 1.7 0 0 1-2.4 0l-8-8A1 1 0 0 1 1.5.5z" fill="#636e70"/></svg>
<svg style="left:55.338543vw;top:4.114584vw;width:0.520834vw;height:0.286459vw" viewBox="0 0 20 11"><path d="M1.5 0.5h17a1 1 0 0 1 .7 1.7l-8 8a1.7 1.7 0 0 1-2.4 0l-8-8A1 1 0 0 1 1.5.5z" fill="#636e70"/></svg>
<svg style="left:63.476563vw;top:4.114584vw;width:0.520834vw;height:0.286459vw" viewBox="0 0 20 11"><path d="M1.5 0.5h17a1 1 0 0 1 .7 1.7l-8 8a1.7 1.7 0 0 1-2.4 0l-8-8A1 1 0 0 1 1.5.5z" fill="#636e70"/></svg>
<svg style="left:92.929688vw;top:4.140626vw;width:0.520834vw;height:0.286459vw" viewBox="0 0 20 11"><path d="M1.5 0.5h17a1 1 0 0 1 .7 1.7l-8 8a1.7 1.7 0 0 1-2.4 0l-8-8A1 1 0 0 1 1.5.5z" fill="#636e70"/></svg>
<svg style="left:0.520834vw;top:0.000001vw;width:1.953126vw;height:2.083334vw" viewBox="20 0 75 80" fill="#e1e4e4" stroke="none">
<path d="M62.400 8.300c3.500 1.500 6.500 5.500 7.700 10.300-1.200.6-2.400.7-3.500.3 2.200 3.300 3.700 7.200 4.300 11.300.5 3.300-.2 6.200-1.700 8.700l.6 4.300-14.500 3.600-2.500 17.700-9.300 2.300c-1.400-5.500-4.300-9.200-8.200-10.600 3.500-3.700 5.600-8.300 5.200-13.800-.300-4-2-6.700-4.500-8.600-2.400-1.800-3.400-4.600-3-7.600.8-6 4.300-10.700 9.500-13.500 4.700-2.500 10.300-3.500 15.600-2.800 1.700-1 3-1.500 4.300-1.600z"/>
<ellipse cx="34.500" cy="20.500" rx="6.500" ry="7.800" transform="rotate(-18 34.500 20.500)" stroke="#282d39" stroke-width="1.200"/>
<ellipse cx="39" cy="62.200" rx="8.200" ry="9.600" transform="rotate(-28 39 62.200)" stroke="#282d39" stroke-width="1.200"/>
<path d="M49.900 45.100L80.900 40L82.900 60.500L53.100 66.900z" stroke="#282d39" stroke-width="1.600"/>
<path d="M54.600 63.800L59.800 55.700L64.300 57.600L69.700 49.300L75.200 53.100L79.600 44.600L80.700 59.300z" fill="#282d39"/>
<ellipse cx="50.500" cy="26.600" rx="3" ry="2.200" transform="rotate(-20 50.500 26.600)" fill="#282d39"/>
<ellipse cx="64" cy="24" rx="2" ry="2.600" transform="rotate(-20 64 24)" fill="#282d39"/>
<ellipse cx="64.900" cy="35.200" rx="3.400" ry="2.500" transform="rotate(-15 64.900 35.200)" fill="#282d39"/>
<path d="M48.300 39c2.500 3.300 5.300 4.600 8.800 4.700 3.400.1 6.400-.9 9.200-2.800" fill="none" stroke="#282d39" stroke-width="1.300"/>
<path d="M62.700 9.500c.8 3.300 2.200 6 4.300 8.600" fill="none" stroke="#282d39" stroke-width="1"/>
</svg>
<svg style="left:0.937501vw;top:8.671876vw;width:0.885418vw;height:0.885418vw" viewBox="0 0 34 34" fill="none" stroke="#c7cbca" stroke-width="3" stroke-linecap="round" stroke-linejoin="round"><circle cx="14" cy="14" r="10.500"/><path d="M22 22l9 9"/></svg>
<svg style="left:0.924480vw;top:11.250001vw;width:0.937501vw;height:0.937501vw" viewBox="0 0 36 36" fill="none" stroke="#c7cbca" stroke-width="3" stroke-linecap="round" stroke-linejoin="round"><path d="M6.500 10.500A14 14 0 1 1 6 26"/><path d="M3.500 3.500v8h8" /><path d="M18.500 10v9.500h-7"/></svg>
<svg style="left:0.872397vw;top:13.007813vw;width:0.989584vw;height:0.833334vw" viewBox="0 0 38 32" fill="none" stroke="#c7cbca" stroke-width="2.6" stroke-linecap="round" stroke-linejoin="round"><path d="M2 2v28h34" /><path d="M7.500 25.500V17l7.500-9.500 7 8.500 6.500-5.500 5 15z" fill="#c7cbca" stroke-width="1.500"/></svg>
<svg style="left:0.781251vw;top:14.583334vw;width:1.197918vw;height:1.145834vw" viewBox="30 560 46 44" fill="none" stroke="#c7cbca" stroke-width="3.1" stroke-linecap="round" stroke-linejoin="round"><path d="M37.850 576.600A15.800 15.800 0 0 1 49.960 566.400"/><path d="M37.850 587.400A15.800 15.800 0 0 0 68.400 583.400"/><path d="M58.200 575.500A8.500 8.500 0 1 0 59.200 587.500"/><path d="M48.300 578.200L52.700 582.600L66.200 567.800" stroke-linejoin="miter"/><circle cx="36.900" cy="581.300" r="1.700" fill="#c7cbca" stroke="none"/></svg>
<svg style="left:0.911459vw;top:16.380209vw;width:0.911459vw;height:0.885418vw" viewBox="0 0 35 34" fill="#c7cbca">
<path d="M8 0h7v4h-7zM20 0h7v4h-7zM7 5h9l.500 5v21c0 1.500-1 2.500-2.500 2.500H2.500C1 33.500 0 32.500 0 31l1.500-9C3 14 5 9 7 5zM19 5h9c2 4 4 9 5.500 17l1.500 9c0 1.500-1 2.500-2.500 2.500H21c-1.500 0-2.500-1-2.500-2.500V10z"/>
<path d="M14.500 12h6v8h-6z"/></svg>
<svg style="left:0.895834vw;top:18.015626vw;width:0.937501vw;height:1.031251vw" viewBox="0 0 40 44" fill="none" stroke="#c7cbca" stroke-width="3.100" stroke-linecap="butt" stroke-linejoin="miter"><path d="M5.600 32.400V13.400L21.100 4.400"/><path d="M12.600 35.900V16.800L28.100 7.900"/><path d="M19.600 20.700L34.300 12.200V30L19.600 38.600z"/></svg>
<svg style="left:0.898438vw;top:19.765626vw;width:0.937501vw;height:0.937501vw" viewBox="0 0 36 36" fill="none" stroke="#c7cbca" stroke-width="2.8" stroke-linecap="round" stroke-linejoin="round"><rect x="5" y="3" width="9" height="9"/><path d="M9.500 12v9"/><path d="M9.500 20.500l6 6-6 6-6-6z"/><path d="M14 7.500h9c4 0 6 3 6 6v6"/><circle cx="29" cy="24" r="4.300"/></svg>
<svg style="left:0.885418vw;top:22.421876vw;width:0.989584vw;height:0.937501vw" viewBox="0 0 38 36"><polygon points="17.55,14.15 9.50,18.80 1.45,14.15 1.45,4.85 9.50,0.20 17.55,4.85" fill="#c7cbca"/><polygon points="26.55,30.65 18.50,35.30 10.45,30.65 10.45,21.35 18.50,16.70 26.55,21.35" fill="#c7cbca"/><polygon points="34.74,13.10 28.50,16.70 22.26,13.10 22.26,5.90 28.50,2.30 34.74,5.90" fill="none" stroke="#c7cbca" stroke-width="3"/></svg>
<svg style="left:0.872397vw;top:24.153647vw;width:0.989584vw;height:0.833334vw" viewBox="0 0 38 32" fill="none" stroke="#c7cbca" stroke-width="2.8" stroke-linecap="round" stroke-linejoin="round"><path d="M11.500 27H9A7.500 7.500 0 0 1 8 12.200 11 11 0 0 1 29.500 11 8 8 0 0 1 29 27h-2.500"/><path d="M23 13.500c-1-1.700-2.500-2.500-4.500-2.500-2.500 0-4.300 1.500-4.300 3.700 0 5 9.300 2.600 9.300 7.700 0 2.300-2 3.800-4.700 3.800-2.300 0-4-1-5-2.800"/><path d="M18.700 8v22.500"/></svg>
<svg style="left:0.911459vw;top:25.893230vw;width:0.937501vw;height:0.807293vw" viewBox="0 0 36 31" fill="#c7cbca"><rect x="0" y="0" width="35.200" height="4.600"/><rect x="0" y="8.700" width="6.600" height="4.400"/><rect x="11" y="8.700" width="24.200" height="4.400"/><rect x="11" y="17.500" width="13" height="4.400"/><rect x="28.500" y="17.500" width="6.700" height="4.400"/><rect x="17.300" y="26.500" width="6.700" height="4.300"/></svg>
<svg style="left:0.781251vw;top:27.343751vw;width:1.197918vw;height:1.197918vw" viewBox="30 1050 46 46" fill="none" stroke="#c7cbca" stroke-width="3" stroke-linecap="butt" stroke-linejoin="miter"><path d="M43.800 1063.900V1060H67V1077.100H58.200"/><path d="M41.100 1072.700V1068.800H53.700V1085.900H48.100"/><rect x="37.700" y="1077.600" width="5.800" height="11.700"/></svg>
<svg style="left:0.781251vw;top:29.166668vw;width:1.197918vw;height:1.041668vw" viewBox="30 1120 46 40" fill="none" stroke="#c7cbca" stroke-width="3" stroke-linecap="butt" stroke-linejoin="round"><path d="M51.300 1134.500V1131.200A6.300 6.300 0 0 0 38.700 1131.200V1133A6.300 6.300 0 0 0 45 1139.300H60.500A6.800 6.800 0 1 1 54.300 1148.600"/><path d="M48.600 1147.700L56 1144.200L56.400 1152.200z" fill="#c7cbca" stroke="none"/></svg>
<svg style="left:0.981772vw;top:30.911459vw;width:0.781251vw;height:0.937501vw" viewBox="0 0 30 36" fill="none" stroke="#c7cbca" stroke-width="2.8" stroke-linecap="round" stroke-linejoin="round"><path d="M15 2L2.500 7v10c0 8 5 13.500 12.500 17 7.500-3.500 12.500-9 12.500-17V7z"/><path d="M15 2v32"/><path d="M3 12.500l12 6M3.500 20l11.500 6"/></svg>
<svg style="left:0.955730vw;top:32.669272vw;width:0.833334vw;height:0.833334vw" viewBox="0 0 32 32" fill="none" stroke="#c7cbca" stroke-width="3" stroke-linecap="round" stroke-linejoin="round"><path d="M27.500 19A12.500 12.500 0 1 1 13 4.500"/><path d="M21.500 2l1.700 4.800L28 8.500l-4.800 1.700L21.500 15l-1.700-4.800L15 8.500l4.800-1.700z" fill="#c7cbca" stroke-width="1"/><path d="M12.500 13l1.200 3.300L17 17.500l-3.300 1.200L12.500 22l-1.200-3.300L8 17.500l3.300-1.200z" fill="#c7cbca" stroke-width="1"/><path d="M3 3v7h7" stroke-width="0"/></svg>
<svg style="left:0.781251vw;top:35.156251vw;width:1.197918vw;height:1.041668vw" viewBox="30 1350 46 40" fill="none" stroke="#c7cbca" stroke-width="2.8" stroke-linecap="butt" stroke-linejoin="round"><path d="M47.900 1363.600L50.700 1359.300H56.500L59.400 1363.600"/><path d="M46.500 1363.600H60.800V1375c0 4.600-3.200 8-7.200 8s-7.100-3.400-7.100-8z"/><path d="M47.900 1364.200L53.600 1369.600L59.400 1364.200M53.600 1369.600V1383"/><path d="M35 1371.500H46.500M60.800 1371.500H70M37.900 1357.200L46.500 1365M67.200 1357.200L60.800 1365M37.900 1385.800L46.800 1378M67.200 1385.800L60.500 1378M49.300 1354.300V1359.300M57.900 1354.300V1359.300"/></svg>
<svg style="left:0.781251vw;top:36.927084vw;width:1.197918vw;height:1.041668vw" viewBox="30 1418 46 40" fill="none" stroke="#c7cbca" stroke-width="3" stroke-linecap="butt" stroke-linejoin="miter"><path d="M40 1450.700A15 15 0 0 1 52.900 1428" stroke-width="4" stroke-dasharray="1.800 2.400 2.200 2.400 2.800 2.400 3.400 2.400 4.200 2.400 7 0"/><path d="M64.200 1433.200A15 15 0 0 1 64.800 1452" stroke-width="5" stroke-linecap="round"/><path d="M62.300 1424.500L50.300 1438.300a3.600 3.600 0 0 0 5.800 4.200z" fill="#c7cbca" stroke="none"/></svg>
<svg style="left:0.781251vw;top:38.541668vw;width:1.197918vw;height:1.145834vw" viewBox="30 1480 46 44" fill="none" stroke="#c7cbca" stroke-width="3" stroke-linecap="butt" stroke-linejoin="miter"><path d="M35.700 1487.400H42.900M45 1487.400H52.200M54.400 1487.400H61.500M35.700 1496.700H44.300M35.700 1506H42.900" stroke-width="4.300"/><circle cx="57.500" cy="1503.200" r="9.600" stroke-width="3.700"/><path d="M54 1505.800L55.500 1501.200L61.200 1500.200V1505.800z" fill="#c7cbca" stroke="none"/><path d="M50.300 1510.700L43.500 1517.600" stroke-width="4.600" stroke-linecap="round"/></svg>
<svg style="left:0.885418vw;top:43.072918vw;width:0.963543vw;height:0.885418vw" viewBox="0 0 37 34" fill="#c7cbca">
<path d="M1 11h9.500c-1.500-1.500-2-3-2-4.500a5 5 0 0 1 10 0c0 1.500-.500 3-2 4.500H26v8.500c1.500-1.300 3-1.800 4.500-1.800a4.700 4.700 0 0 1 0 9.400c-1.500 0-3-.500-4.500-1.800V33.500H16.500v-3c0-2-1.500-3.500-3.500-3.500s-3.500 1.500-3.500 3.500v3H1z"/></svg>
<svg style="left:0.781251vw;top:44.661459vw;width:1.302084vw;height:1.041668vw" viewBox="30 1715 50 40" fill="#c7cbca">
<path d="M56.100 1720.300c1.200 6.700 3.600 9.600 11 11.500-7.400 1.900-9.800 4.800-11 11.500-1.200-6.700-3.600-9.600-11-11.500 7.400-1.900 9.800-4.800 11-11.500z"/>
<path d="M44.400 1736.300c.8 4.300 2.300 6.100 6.800 7.300-4.500 1.200-6 3-6.800 7.300-.8-4.300-2.300-6.100-6.800-7.300 4.500-1.200 6-3 6.800-7.300z" stroke="#282d39" stroke-width="2.400" paint-order="stroke"/></svg>
<svg style="left:0.807293vw;top:46.484376vw;width:1.158855vw;height:1.158855vw" viewBox="31 1785 44.500 44.500" shape-rendering="crispEdges">
<defs><clipPath id="avc"><circle cx="53.250" cy="1807.250" r="22.250"/></clipPath></defs>
<g clip-path="url(#avc)"><rect x="31" y="1785" width="45" height="45" fill="#5a0862"/>
<rect x="48.100" y="1789.500" width="8.500" height="4.300" fill="#b2f64f"/>
<rect x="43.600" y="1799.100" width="4.500" height="4.300" fill="#b2f64f"/><rect x="56.600" y="1799.100" width="4.500" height="4.300" fill="#b2f64f"/>
<rect x="43.600" y="1803.300" width="17.500" height="4.600" fill="#b2f64f"/>
<rect x="34.600" y="1807.800" width="35.800" height="4.400" fill="#b2f64f"/>
<rect x="34.600" y="1812.100" width="13.500" height="4.400" fill="#b2f64f"/><rect x="56.600" y="1812.100" width="13.800" height="4.400" fill="#b2f64f"/>
<rect x="34.600" y="1816.400" width="9" height="4.300" fill="#b2f64f"/><rect x="61.100" y="1816.400" width="9.300" height="4.300" fill="#b2f64f"/>
</g></svg>
<svg style="left:3.645834vw;top:0.390626vw;width:1.562501vw;height:1.562501vw" viewBox="0 0 60 60" fill="none" stroke="#687478" stroke-width="3.500" stroke-linejoin="miter" stroke-linecap="butt">
<path d="M30.700 52.600L10.900 41.400V19.800L19.900 14.600L38 25V35.700"/>
<path d="M27.300 9.100L47 20.400V41.900L38 47.200L19.900 36.800V26"/>
<path d="M27 27.700L31.800 30.300V34.800L27 32.300z" fill="#687478" stroke="none"/></svg>
<svg style="left:4.700522vw;top:5.169272vw;width:0.989584vw;height:0.885418vw" viewBox="0 0 38 34" fill="none" stroke="#687377" stroke-width="2.900" stroke-linecap="butt" stroke-linejoin="miter"><path d="M1.700 19.800L18.900 2.400L36.100 19.800"/><path d="M7.800 14.800V31.100H30V14.800"/><path d="M15.200 31.100V19.100H23V31.100"/><path d="M27 3V10.800"/></svg>
<svg style="left:4.713543vw;top:8.658855vw;width:0.989584vw;height:0.989584vw" viewBox="0 0 38 38" fill="none" stroke="#fff" stroke-width="3.4" stroke-linecap="round" stroke-linejoin="round"><path d="M17.500 34.200A15.700 15.700 0 1 1 33.800 14.700"/><path d="M17.200 26.600A8.200 8.200 0 1 1 26.700 17.100"/><circle cx="18.600" cy="18.500" r="2.600" fill="#fff" stroke="none"/><path d="M22.400 30.400l4.300 4.300 9.300-9.300" stroke-linecap="butt" stroke-linejoin="miter"/></svg>
<svg style="left:4.687501vw;top:15.312501vw;width:1.041668vw;height:1.145834vw" viewBox="0 0 40 44" fill="none" stroke="#6e797c" stroke-width="3" stroke-linecap="butt" stroke-linejoin="miter"><path d="M5.600 32.400V13.400L21.100 4.400"/><path d="M12.600 35.900V16.800L28.100 7.900"/><path d="M19.600 20.700L34.300 12.200V30L19.600 38.600z"/></svg>
<svg style="left:18.229168vw;top:3.802084vw;width:0.885418vw;height:0.885418vw" viewBox="0 0 34 34" fill="none" stroke="#5c686b" stroke-width="2.300">
<defs><clipPath id="hc"><rect x="4.600" y="4.300" width="8.200" height="25.200"/></clipPath></defs>
<g clip-path="url(#hc)" stroke-width="1.300" stroke="#5c686b"><path d="M-2 10L14 -6M-2 14.200L14 -1.800M-2 18.400L14 2.400M-2 22.600L14 6.600M-2 26.800L14 10.800M-2 31L14 15M-2 35.200L14 19.200M-2 39.400L14 23.400M-2 43.600L14 27.600"/></g>
<rect x="3.450" y="3.150" width="27.400" height="27.400" rx="3"/>
<path d="M23.500 11L17.200 16.700L23.500 22.800" stroke-width="3" stroke-linecap="butt" stroke-linejoin="miter"/></svg>
<svg style="left:24.414063vw;top:3.906251vw;width:0.468751vw;height:0.677084vw" viewBox="0 0 18 26" fill="none" stroke="#5d696c" stroke-width="2.5" stroke-linecap="round" stroke-linejoin="round"><path d="M3.500 2.500l10.500 10.500-10.500 10.500"/></svg>
<svg style="left:94.270834vw;top:0.703126vw;width:1.041668vw;height:1.041668vw" viewBox="3620 27 40 40"><path d="M3642.92 36.24L3642.29 32.24L3636.51 32.24L3635.88 36.24L3632.31 38.30L3628.54 36.84L3625.65 41.85L3628.80 44.39L3628.80 48.51L3625.65 51.05L3628.54 56.06L3632.31 54.60L3635.88 56.66L3636.51 60.66L3642.29 60.66L3642.92 56.66L3646.49 54.60L3650.26 56.06L3653.15 51.05L3650.00 48.51L3650.00 44.39L3653.15 41.85L3650.26 36.84L3646.49 38.30zM3634.20 46.45a5.200 5.200 0 1 0 10.400 0a5.200 5.200 0 1 0 -10.400 0z" fill="#687377" fill-rule="evenodd" stroke="#687377" stroke-width="1.200" stroke-linejoin="round"/></svg>
<svg style="left:91.536459vw;top:3.940105vw;width:0.625001vw;height:0.677084vw" viewBox="0 0 24 26" fill="none" stroke="#687377" stroke-width="2.300" stroke-linecap="butt" stroke-linejoin="round"><path d="M1.800 1.900H22"/><path d="M6.700 1.900V9C6.700 12.300 2.200 13 1.500 16.600H22.200C21.500 13 17.500 12.300 17.500 9V1.900"/><path d="M11.800 16.600V25.300"/></svg>
<svg style="left:94.817709vw;top:3.880209vw;width:0.703126vw;height:0.703126vw" viewBox="0 0 27 27" fill="#646f75"><path d="M13.500 0v27L0 13.500zM27 0v27L13.500 13.500z"/></svg>
<svg style="left:97.955730vw;top:3.880209vw;width:0.703126vw;height:0.703126vw" viewBox="0 0 27 27" fill="#646f75"><path d="M0 0v27l13.500-13.500zM13.500 0v27L27 13.500z"/></svg>
<span class="t" id="t1" style="top:0.668751vw;font-size:1.086720vw;line-height:1.086720vw;color:#1c2b34;left:5.439324vw;">Internal Developer Portal</span>
<span class="t" id="t2" style="top:0.740626vw;font-size:0.894011vw;line-height:0.894011vw;color:#1c2b34;left:19.728126vw;">Overview</span>
<span class="t" id="t3" style="top:0.736199vw;font-size:0.899220vw;line-height:0.899220vw;color:#5f6a6f;left:26.222657vw;">Software Catalog</span>
<span class="t" id="t4" style="top:0.763803vw;font-size:0.866668vw;line-height:0.866668vw;color:#5f6a6f;left:35.859116vw;">Scorecards</span>
<span class="t" id="t5" style="top:0.908595vw;font-size:0.643230vw;line-height:0.643230vw;color:#a640f0;font-weight:700;left:40.724741vw;transform:scaleX(0.9161);transform-origin:left center;">PREVIEW</span>
<span class="t" id="t6" style="top:0.757032vw;font-size:0.874480vw;line-height:0.874480vw;color:#5f6a6f;left:46.207813vw;">Self-Service Actions</span>
<span class="t" id="t7" style="top:0.908595vw;font-size:0.643230vw;line-height:0.643230vw;color:#a640f0;font-weight:700;left:54.465886vw;transform:scaleX(0.9558);transform-origin:left center;">NEW</span>
<span class="t" id="t8" style="top:0.851824vw;font-size:0.765626vw;line-height:0.765626vw;color:#1c2b34;letter-spacing:0.016433vw;left:95.604168vw;">Manage</span>
<span class="t" id="t9" style="top:3.616928vw;font-size:0.643230vw;line-height:0.643230vw;color:#5f6a6f;letter-spacing:-0.011822vw;left:4.246095vw;">OVERVIEW</span>
<span class="t" id="t10" style="top:5.226824vw;font-size:0.765626vw;line-height:0.765626vw;color:#1c2b34;letter-spacing:0.024845vw;left:6.638022vw;">Home</span>
<span class="t" id="t11" style="top:5.338543vw;font-size:0.633855vw;line-height:0.633855vw;color:#a640f0;font-weight:700;left:9.232553vw;">COMING SOON</span>
<span class="t" id="t12" style="top:7.174220vw;font-size:0.643230vw;line-height:0.643230vw;color:#5f6a6f;left:4.223699vw;transform:scaleX(0.9509);transform-origin:left center;">REPORTS</span>
<span class="t" id="t13" style="top:8.811459vw;font-size:0.779689vw;line-height:0.779689vw;color:#fff;left:6.623439vw;-webkit-text-stroke:0.013022vw #fff;">Reliability Overview</span>
<span class="t" id="t14" style="top:11.250782vw;font-size:0.706511vw;line-height:0.706511vw;color:#1c2b34;left:5.623959vw;">SLO Performance</span>
<span class="t" id="t15" style="top:13.174220vw;font-size:0.710938vw;line-height:0.710938vw;color:#1c2b34;letter-spacing:0.011954vw;left:5.596355vw;">Incident Trends</span>
<span class="t" id="t16" style="top:15.515886vw;font-size:0.765626vw;line-height:0.765626vw;color:#1c2b34;letter-spacing:0.004558vw;left:6.634116vw;">Scorecards Performance</span>
<span class="t" id="t17" style="top:3.870053vw;font-size:0.765626vw;line-height:0.765626vw;color:#1c2b34;letter-spacing:0.008282vw;left:20.205730vw;">Filter by</span>
<span class="t" id="t18" style="top:3.870053vw;font-size:0.765626vw;line-height:0.765626vw;color:#1c2b34;letter-spacing:0.006381vw;left:25.440105vw;">My Teams</span>
<span class="t" id="t19" style="top:3.030470vw;font-size:0.656251vw;line-height:0.656251vw;color:#5f6a6f;letter-spacing:0.002423vw;left:36.119793vw;background:#fff;padding:0 0.130209vw;margin-left:-0.130207vw;">teams</span>
<span class="t" id="t20" style="top:3.051043vw;font-size:0.631772vw;line-height:0.631772vw;color:#5f6a6f;left:39.947918vw;background:#fff;padding:0 0.130209vw;margin-left:-0.130207vw;">services</span>
<span class="t" id="t21" style="top:3.030470vw;font-size:0.656251vw;line-height:0.656251vw;color:#5f6a6f;letter-spacing:0.007449vw;left:44.279949vw;background:#fff;padding:0 0.130209vw;margin-left:-0.130207vw;">incident-severity</span>
<span class="t" id="t22" style="top:3.030470vw;font-size:0.656251vw;line-height:0.656251vw;color:#5f6a6f;letter-spacing:0.011277vw;left:51.139324vw;background:#fff;padding:0 0.130209vw;margin-left:-0.130207vw;">incident-state</span>
<span class="t" id="t23" style="top:3.886199vw;font-size:0.937501vw;line-height:0.937501vw;color:#778182;left:36.119793vw;">*</span>
<span class="t" id="t24" style="top:3.886199vw;font-size:0.937501vw;line-height:0.937501vw;color:#778182;left:39.947918vw;">*</span>
<span class="t" id="t25" style="top:3.886199vw;font-size:0.937501vw;line-height:0.937501vw;color:#778182;left:44.296876vw;">*</span>
<span class="t" id="t26" style="top:3.886199vw;font-size:0.937501vw;line-height:0.937501vw;color:#778182;left:51.158855vw;">*</span>
<span class="t" id="t27" style="top:3.870053vw;font-size:0.765626vw;line-height:0.765626vw;color:#1c2b34;letter-spacing:0.006824vw;left:56.768230vw;">Roll up</span>
<span class="t" id="t28" style="top:3.875782vw;font-size:0.758855vw;line-height:0.758855vw;color:#1c2b34;left:60.114584vw;">Weekly</span>
<span class="t" id="t29" style="top:3.870053vw;font-size:0.765626vw;line-height:0.765626vw;color:#1c2b34;letter-spacing:0.006407vw;left:64.998699vw;">Group by</span>
<span class="t" id="t30" style="top:3.870053vw;font-size:0.765626vw;line-height:0.765626vw;color:#0d4fb8;letter-spacing:0.001720vw;left:69.244793vw;">Team</span>
<span class="t" id="t31" style="top:3.887501vw;font-size:0.745053vw;line-height:0.745053vw;color:#1c2b34;left:72.317188vw;">Service</span>
<span class="t" id="t32" style="top:3.835418vw;font-size:0.806772vw;line-height:0.806772vw;color:#5a6673;letter-spacing:0.009324vw;left:77.420574vw;">3mo</span>
<span class="t" id="t33" style="top:3.870053vw;font-size:0.765626vw;line-height:0.765626vw;color:#1c2b34;letter-spacing:0.008725vw;left:79.914063vw;">Past 3 Months</span>
<span class="t" id="t34" style="top:3.151563vw;font-size:0.553126vw;line-height:0.553126vw;color:#5f6a6f;left:80.008595vw;background:#fff;padding:0 0.156251vw;margin-left:-0.156249vw;">UTC-05:00</span>
<span class="t" id="t35" style="top:7.808334vw;font-size:1.066407vw;line-height:1.066407vw;color:#1c2b34;font-weight:700;left:54.964845vw;">Incident Trends</span>
<span class="t" id="t36" style="top:12.943751vw;font-size:0.835418vw;line-height:0.835418vw;color:#1c2b34;left:51.770834vw;">The data is based on</span>
<span class="t" id="t37" style="top:12.917188vw;font-size:0.866928vw;line-height:0.866928vw;color:#1c2b34;left:59.695834vw;text-decoration:underline;text-decoration-thickness:0.065105vw;text-underline-offset:0.078126vw;text-decoration-skip-ink:auto;">Datadog Incidents</span>
<span class="t" id="t38" style="top:12.945574vw;font-size:0.833334vw;line-height:0.833334vw;color:#1c2b34;left:66.718751vw;">.</span>
<span class="t" id="t39" style="top:16.683595vw;font-size:0.758334vw;line-height:0.758334vw;color:#1c2b34;font-weight:700;left:20.859376vw;">Top Incident Count by Team</span>
<span class="t" id="t40" style="top:16.679168vw;font-size:0.763543vw;line-height:0.763543vw;color:#1c2b34;font-weight:700;left:46.945313vw;">Weekly Incident Count by Team</span>
<span class="t" id="t41" style="top:32.424741vw;font-size:0.765626vw;line-height:0.765626vw;color:#1c2b34;font-weight:700;letter-spacing:0.001511vw;left:20.859376vw;">Top Mean Customer Impact Duration by Team</span>
<span class="t" id="t42" style="top:48.229689vw;font-size:0.753126vw;line-height:0.753126vw;color:#1c2b34;font-weight:700;left:20.832553vw;">Incidents by Severity</span>
<span class="t" id="t43" style="top:48.220574vw;font-size:0.763803vw;line-height:0.763803vw;color:#1c2b34;font-weight:700;left:40.397136vw;">Incidents by State</span>
<span class="t" id="t44" style="top:48.219011vw;font-size:0.765626vw;line-height:0.765626vw;color:#1c2b34;font-weight:700;letter-spacing:0.003256vw;left:59.998699vw;">Mean Time to Repair</span>
<span class="t" id="t45" style="top:48.219272vw;font-size:0.765366vw;line-height:0.765366vw;color:#1c2b34;font-weight:700;left:73.072918vw;">Weekly Mean Time to Repair</span>
<span class="t" id="t46" style="top:18.333074vw;font-size:0.677084vw;line-height:0.677084vw;color:#1c2b34;font-weight:700;letter-spacing:0.015626vw;right:77.752605vw;">483</span>
<span class="t" id="t47" style="top:18.327866vw;font-size:0.710938vw;line-height:0.710938vw;color:#10191f;letter-spacing:0.006485vw;left:23.132813vw;">N/A</span>
<span class="t" id="t48" style="top:19.421095vw;font-size:0.677084vw;line-height:0.677084vw;color:#1c2b34;font-weight:700;letter-spacing:0.015626vw;right:77.752605vw;">30</span>
<span class="t" id="t49" style="top:19.415886vw;font-size:0.710938vw;line-height:0.710938vw;color:#10191f;letter-spacing:0.013907vw;left:23.160157vw;">morgan-lupton-direct-page</span>
<span class="t" id="t50" style="top:20.509116vw;font-size:0.677084vw;line-height:0.677084vw;color:#1c2b34;font-weight:700;letter-spacing:0.015626vw;right:77.752605vw;">24</span>
<span class="t" id="t51" style="top:20.503907vw;font-size:0.710938vw;line-height:0.710938vw;color:#10191f;letter-spacing:0.004506vw;left:23.187501vw;">transactions</span>
<span class="t" id="t52" style="top:21.597136vw;font-size:0.677084vw;line-height:0.677084vw;color:#1c2b34;font-weight:700;letter-spacing:0.015626vw;right:77.752605vw;">20</span>
<span class="t" id="t53" style="top:21.611459vw;font-size:0.688022vw;line-height:0.688022vw;color:#10191f;left:23.214063vw;">japan-se</span>
<span class="t" id="t54" style="top:22.685157vw;font-size:0.677084vw;line-height:0.677084vw;color:#1c2b34;font-weight:700;letter-spacing:0.015626vw;right:77.752605vw;">14</span>
<span class="t" id="t55" style="top:22.679949vw;font-size:0.710938vw;line-height:0.710938vw;color:#10191f;letter-spacing:0.000756vw;left:23.187501vw;">shopist</span>
<span class="t" id="t56" style="top:23.773178vw;font-size:0.677084vw;line-height:0.677084vw;color:#1c2b34;font-weight:700;letter-spacing:0.015626vw;right:77.752605vw;">14</span>
<span class="t" id="t57" style="top:23.767970vw;font-size:0.710938vw;line-height:0.710938vw;color:#10191f;letter-spacing:0.005079vw;left:23.160157vw;">byte-club</span>
<span class="t" id="t58" style="top:24.861199vw;font-size:0.677084vw;line-height:0.677084vw;color:#1c2b34;font-weight:700;letter-spacing:0.015626vw;right:77.752605vw;">14</span>
<span class="t" id="t59" style="top:24.855991vw;font-size:0.710938vw;line-height:0.710938vw;color:#10191f;letter-spacing:0.008517vw;left:23.160157vw;">majors</span>
<span class="t" id="t60" style="top:25.949220vw;font-size:0.677084vw;line-height:0.677084vw;color:#1c2b34;font-weight:700;letter-spacing:0.015626vw;right:77.752605vw;">13</span>
<span class="t" id="t61" style="top:25.955730vw;font-size:0.697136vw;line-height:0.697136vw;color:#10191f;left:23.187501vw;">vanessa-checkout</span>
<span class="t" id="t62" style="top:27.037241vw;font-size:0.677084vw;line-height:0.677084vw;color:#1c2b34;font-weight:700;letter-spacing:0.015626vw;right:77.752605vw;">13</span>
<span class="t" id="t63" style="top:27.058595vw;font-size:0.679689vw;line-height:0.679689vw;color:#10191f;left:23.161459vw;">csse-emea</span>
<span class="t" id="t64" style="top:28.125261vw;font-size:0.677084vw;line-height:0.677084vw;color:#1c2b34;font-weight:700;letter-spacing:0.015626vw;right:77.752605vw;">12</span>
<span class="t" id="t65" style="top:28.133595vw;font-size:0.695053vw;line-height:0.695053vw;color:#10191f;left:23.187501vw;">france-se</span>
<span class="t" id="t66" style="top:29.213282vw;font-size:0.677084vw;line-height:0.677084vw;color:#1c2b34;font-weight:700;letter-spacing:0.015626vw;right:77.752605vw;">12</span>
<span class="t" id="t67" style="top:29.208074vw;font-size:0.710938vw;line-height:0.710938vw;color:#10191f;letter-spacing:0.007527vw;left:23.160157vw;">checkout-operations</span>
<span class="t" id="t68" style="top:30.301303vw;font-size:0.677084vw;line-height:0.677084vw;color:#1c2b34;font-weight:700;letter-spacing:0.015626vw;right:77.752605vw;">10</span>
<span class="t" id="t69" style="top:30.296095vw;font-size:0.710938vw;line-height:0.710938vw;color:#10191f;letter-spacing:0.013959vw;left:23.160157vw;">adengineering</span>
<span class="t" id="t70" style="top:34.070053vw;font-size:0.677084vw;line-height:0.677084vw;color:#1c2b34;font-weight:700;letter-spacing:0.005209vw;right:74.057293vw;">89.43 days</span>
<span class="t" id="t71" style="top:34.067449vw;font-size:0.710938vw;line-height:0.710938vw;color:#10191f;letter-spacing:0.009246vw;left:26.847657vw;">aoto-alone</span>
<span class="t" id="t72" style="top:35.157293vw;font-size:0.677084vw;line-height:0.677084vw;color:#1c2b34;font-weight:700;letter-spacing:0.005209vw;right:74.057293vw;">44.03 days</span>
<span class="t" id="t73" style="top:35.154688vw;font-size:0.710938vw;line-height:0.710938vw;color:#10191f;letter-spacing:0.003100vw;left:26.875001vw;">south-mcse</span>
<span class="t" id="t74" style="top:36.244532vw;font-size:0.677084vw;line-height:0.677084vw;color:#1c2b34;font-weight:700;letter-spacing:0.005209vw;right:74.057293vw;">41.28 days</span>
<span class="t" id="t75" style="top:36.241928vw;font-size:0.710938vw;line-height:0.710938vw;color:#10191f;letter-spacing:0.008725vw;left:26.847657vw;">guardian-ops</span>
<span class="t" id="t76" style="top:37.331772vw;font-size:0.677084vw;line-height:0.677084vw;color:#1c2b34;font-weight:700;letter-spacing:0.005209vw;right:74.057293vw;">29.95 days</span>
<span class="t" id="t77" style="top:37.329168vw;font-size:0.710938vw;line-height:0.710938vw;color:#10191f;letter-spacing:0.004011vw;left:26.875001vw;">test123</span>
<span class="t" id="t78" style="top:38.419011vw;font-size:0.677084vw;line-height:0.677084vw;color:#1c2b34;font-weight:700;letter-spacing:0.005209vw;right:74.057293vw;">26.11 days</span>
<span class="t" id="t79" style="top:38.416407vw;font-size:0.710938vw;line-height:0.710938vw;color:#10191f;letter-spacing:0.019767vw;left:26.847657vw;">inventory</span>
<span class="t" id="t80" style="top:39.506251vw;font-size:0.677084vw;line-height:0.677084vw;color:#1c2b34;font-weight:700;letter-spacing:0.005209vw;right:74.057293vw;">18.42 days</span>
<span class="t" id="t81" style="top:39.525522vw;font-size:0.685157vw;line-height:0.685157vw;color:#10191f;left:26.848699vw;">csse-emea</span>
<span class="t" id="t82" style="top:40.593491vw;font-size:0.677084vw;line-height:0.677084vw;color:#1c2b34;font-weight:700;letter-spacing:0.005209vw;right:74.057293vw;">17.77 days</span>
<span class="t" id="t83" style="top:40.590886vw;font-size:0.710938vw;line-height:0.710938vw;color:#10191f;letter-spacing:0.015600vw;left:26.820314vw;">N/A</span>
<span class="t" id="t84" style="top:41.680730vw;font-size:0.677084vw;line-height:0.677084vw;color:#1c2b34;font-weight:700;letter-spacing:0.005209vw;right:74.057293vw;">13.38 days</span>
<span class="t" id="t85" style="top:41.678126vw;font-size:0.710938vw;line-height:0.710938vw;color:#10191f;letter-spacing:0.013360vw;left:26.847657vw;">morgan-lupton-direct-page</span>
<span class="t" id="t86" style="top:42.767970vw;font-size:0.677084vw;line-height:0.677084vw;color:#1c2b34;font-weight:700;letter-spacing:0.005209vw;right:74.057293vw;">5.04 days</span>
<span class="t" id="t87" style="top:42.793491vw;font-size:0.677605vw;line-height:0.677605vw;color:#10191f;left:26.875001vw;">socal-ese</span>
<span class="t" id="t88" style="top:43.855209vw;font-size:0.677084vw;line-height:0.677084vw;color:#1c2b34;font-weight:700;letter-spacing:0.005209vw;right:74.057293vw;">1.1 days</span>
<span class="t" id="t89" style="top:43.852605vw;font-size:0.710938vw;line-height:0.710938vw;color:#10191f;letter-spacing:0.000991vw;left:26.847657vw;">on-call-case-incident-testers</span>
<span class="t" id="t90" style="top:44.942449vw;font-size:0.677084vw;line-height:0.677084vw;color:#1c2b34;font-weight:700;letter-spacing:0.005209vw;right:74.057293vw;">14.71 hr</span>
<span class="t" id="t91" style="top:44.939845vw;font-size:0.710938vw;line-height:0.710938vw;color:#10191f;letter-spacing:0.002631vw;left:26.847657vw;">australia-se</span>
<span class="t" id="t92" style="top:46.029688vw;font-size:0.677084vw;line-height:0.677084vw;color:#1c2b34;font-weight:700;letter-spacing:0.005209vw;right:74.057293vw;">9.53 hr</span>
<span class="t" id="t93" style="top:46.027084vw;font-size:0.710938vw;line-height:0.710938vw;color:#10191f;letter-spacing:0.009220vw;left:26.847657vw;">payments</span>
<span class="t" id="t94" style="top:-0.573176vw;font-size:0.677084vw;line-height:0.677084vw;color:#8b959b;letter-spacing:0.006511vw;left:0.000001vw;left:19.583334vw;top:40.104168vw;width:3.125001vw;text-align:center;transform:rotate(-90deg);transform-origin:center;">Minutes</span>
<span class="t" id="t95" style="top:43.851043vw;font-size:0.572918vw;line-height:0.572918vw;color:#1c2b34;letter-spacing:0.005209vw;right:51.093751vw;">0</span>
<span class="t" id="t96" style="top:42.413803vw;font-size:0.572918vw;line-height:0.572918vw;color:#1c2b34;letter-spacing:0.005209vw;right:51.093751vw;">10</span>
<span class="t" id="t97" style="top:40.976563vw;font-size:0.572918vw;line-height:0.572918vw;color:#1c2b34;letter-spacing:0.005209vw;right:51.093751vw;">20</span>
<span class="t" id="t98" style="top:39.539324vw;font-size:0.572918vw;line-height:0.572918vw;color:#1c2b34;letter-spacing:0.005209vw;right:51.093751vw;">30</span>
<span class="t" id="t99" style="top:38.102084vw;font-size:0.572918vw;line-height:0.572918vw;color:#1c2b34;letter-spacing:0.005209vw;right:51.093751vw;">40</span>
<span class="t" id="t100" style="top:36.664845vw;font-size:0.572918vw;line-height:0.572918vw;color:#1c2b34;letter-spacing:0.005209vw;right:51.093751vw;">50</span>
<span class="t" id="t101" style="top:35.227605vw;font-size:0.572918vw;line-height:0.572918vw;color:#1c2b34;letter-spacing:0.005209vw;right:51.093751vw;">60</span>
<span class="t" id="t102" style="top:33.790366vw;font-size:0.572918vw;line-height:0.572918vw;color:#1c2b34;letter-spacing:0.005209vw;right:51.093751vw;">70</span>
<span class="t" id="t103" style="top:32.353126vw;font-size:0.572918vw;line-height:0.572918vw;color:#1c2b34;letter-spacing:0.005209vw;right:51.093751vw;">80</span>
<span class="t" id="t104" style="top:30.915886vw;font-size:0.572918vw;line-height:0.572918vw;color:#1c2b34;letter-spacing:0.005209vw;right:51.093751vw;">90</span>
<span class="t" id="t105" style="top:29.478647vw;font-size:0.572918vw;line-height:0.572918vw;color:#1c2b34;letter-spacing:0.005209vw;right:51.093751vw;">100</span>
<span class="t" id="t106" style="top:28.041407vw;font-size:0.572918vw;line-height:0.572918vw;color:#1c2b34;letter-spacing:0.005209vw;right:51.093751vw;">110</span>
<span class="t" id="t107" style="top:26.604168vw;font-size:0.572918vw;line-height:0.572918vw;color:#1c2b34;letter-spacing:0.005209vw;right:51.093751vw;">120</span>
<span class="t" id="t108" style="top:25.166928vw;font-size:0.572918vw;line-height:0.572918vw;color:#1c2b34;letter-spacing:0.005209vw;right:51.093751vw;">130</span>
<span class="t" id="t109" style="top:23.729688vw;font-size:0.572918vw;line-height:0.572918vw;color:#1c2b34;letter-spacing:0.005209vw;right:51.093751vw;">140</span>
<span class="t" id="t110" style="top:22.292449vw;font-size:0.572918vw;line-height:0.572918vw;color:#1c2b34;letter-spacing:0.005209vw;right:51.093751vw;">150</span>
<span class="t" id="t111" style="top:20.855209vw;font-size:0.572918vw;line-height:0.572918vw;color:#1c2b34;letter-spacing:0.005209vw;right:51.093751vw;">160</span>
<span class="t" id="t112" style="top:19.417970vw;font-size:0.572918vw;line-height:0.572918vw;color:#1c2b34;letter-spacing:0.005209vw;right:51.093751vw;">170</span>
<span class="t" id="t113" style="top:17.980730vw;font-size:0.572918vw;line-height:0.572918vw;color:#1c2b34;letter-spacing:0.005209vw;right:51.093751vw;">180</span>
<span class="t" id="t114" style="top:44.525522vw;font-size:0.572918vw;line-height:0.572918vw;color:#1c2b34;letter-spacing:0.007813vw;left:24.386720vw;width:52.083334vw;text-align:center;">Feb 23</span>
<span class="t" id="t115" style="top:44.525522vw;font-size:0.572918vw;line-height:0.572918vw;color:#1c2b34;letter-spacing:0.007813vw;left:28.188803vw;width:52.083334vw;text-align:center;">Mar 2</span>
<span class="t" id="t116" style="top:44.525522vw;font-size:0.572918vw;line-height:0.572918vw;color:#1c2b34;letter-spacing:0.007813vw;left:31.990886vw;width:52.083334vw;text-align:center;">Mar 9</span>
<span class="t" id="t117" style="top:44.525522vw;font-size:0.572918vw;line-height:0.572918vw;color:#1c2b34;letter-spacing:0.007813vw;left:35.792970vw;width:52.083334vw;text-align:center;">Mar 16</span>
<span class="t" id="t118" style="top:44.525522vw;font-size:0.572918vw;line-height:0.572918vw;color:#1c2b34;letter-spacing:0.007813vw;left:39.595053vw;width:52.083334vw;text-align:center;">Mar 23</span>
<span class="t" id="t119" style="top:44.525522vw;font-size:0.572918vw;line-height:0.572918vw;color:#1c2b34;letter-spacing:0.007813vw;left:43.397136vw;width:52.083334vw;text-align:center;">Mar 30</span>
<span class="t" id="t120" style="top:44.525522vw;font-size:0.572918vw;line-height:0.572918vw;color:#1c2b34;letter-spacing:0.007813vw;left:47.199220vw;width:52.083334vw;text-align:center;">Apr 6</span>
<span class="t" id="t121" style="top:44.525522vw;font-size:0.572918vw;line-height:0.572918vw;color:#1c2b34;letter-spacing:0.007813vw;left:51.001303vw;width:52.083334vw;text-align:center;">Apr 13</span>
<span class="t" id="t122" style="top:44.525522vw;font-size:0.572918vw;line-height:0.572918vw;color:#1c2b34;letter-spacing:0.007813vw;left:54.803386vw;width:52.083334vw;text-align:center;">Apr 20</span>
<span class="t" id="t123" style="top:44.525522vw;font-size:0.572918vw;line-height:0.572918vw;color:#1c2b34;letter-spacing:0.007813vw;left:58.605470vw;width:52.083334vw;text-align:center;">Apr 27</span>
<span class="t" id="t124" style="top:44.525522vw;font-size:0.572918vw;line-height:0.572918vw;color:#1c2b34;letter-spacing:0.007813vw;left:62.407553vw;width:52.083334vw;text-align:center;">May 4</span>
<span class="t" id="t125" style="top:44.525522vw;font-size:0.572918vw;line-height:0.572918vw;color:#1c2b34;letter-spacing:0.007813vw;left:66.209636vw;width:52.083334vw;text-align:center;">May 11</span>
<span class="t" id="t126" style="top:44.525522vw;font-size:0.572918vw;line-height:0.572918vw;color:#1c2b34;letter-spacing:0.007813vw;left:70.011720vw;width:52.083334vw;text-align:center;">May 18</span>
<span class="t" id="t127" style="top:46.048699vw;font-size:0.656251vw;line-height:0.656251vw;color:#1c2b34;letter-spacing:0.008751vw;left:49.451824vw;">ach-test-team</span>
<span class="t" id="t128" style="top:46.048699vw;font-size:0.656251vw;line-height:0.656251vw;color:#1c2b34;letter-spacing:0.008673vw;left:55.433595vw;">ade</span>
<span class="t" id="t129" style="top:46.048699vw;font-size:0.656251vw;line-height:0.656251vw;color:#1c2b34;letter-spacing:0.016537vw;left:58.423178vw;">adengineering</span>
<span class="t" id="t130" style="top:46.048699vw;font-size:0.656251vw;line-height:0.656251vw;color:#1c2b34;letter-spacing:0.005782vw;left:64.647136vw;">adhoc</span>
<span class="t" id="t131" style="top:46.048699vw;font-size:0.656251vw;line-height:0.656251vw;color:#1c2b34;letter-spacing:0.001459vw;left:68.347657vw;">ads</span>
<span class="t" id="t132" style="top:46.048699vw;font-size:0.656251vw;line-height:0.656251vw;color:#1c2b34;letter-spacing:0.012866vw;left:71.298178vw;">ai-product-team</span>
<span class="t" id="t133" style="top:46.048699vw;font-size:0.656251vw;line-height:0.656251vw;color:#1c2b34;letter-spacing:0.011798vw;left:77.936199vw;">anomaly-watch-team</span>
<span class="t" id="t134" style="top:46.048699vw;font-size:0.656251vw;line-height:0.656251vw;color:#1c2b34;letter-spacing:0.011876vw;left:86.087241vw;">aoto-alone</span>
<span class="t" id="t135" style="top:46.048699vw;font-size:0.656251vw;line-height:0.656251vw;color:#1c2b34;letter-spacing:0.003647vw;left:91.160157vw;-webkit-mask-image:linear-gradient(90deg,#000 70%,transparent 100%);mask-image:linear-gradient(90deg,#000 70%,transparent 100%);">apac-asean-</span>
<span class="t" id="t136" style="top:46.069272vw;font-size:0.631772vw;line-height:0.631772vw;color:#1c2b34;left:95.197657vw;">+91</span>
<span class="t" id="t137" style="top:50.395834vw;font-size:0.664584vw;line-height:0.664584vw;color:#5f6a6f;left:28.452605vw;">Copyright Datadog, Inc. 2025</span>
<span class="t" id="t138" style="top:50.412761vw;font-size:0.644532vw;line-height:0.644532vw;color:#5f6a6f;left:37.307553vw;">- 35.65734085</span>
<span class="t" id="t139" style="top:50.407293vw;font-size:0.651043vw;line-height:0.651043vw;color:#5f6a6f;left:41.703126vw;">-</span>
<span class="t" id="t140" style="top:50.385938vw;font-size:0.676043vw;line-height:0.676043vw;color:#0b6cbf;left:42.016147vw;">Master Subscription Agreement</span>
<span class="t" id="t141" style="top:50.407293vw;font-size:0.651043vw;line-height:0.651043vw;color:#5f6a6f;left:51.708334vw;">-</span>
<span class="t" id="t142" style="top:50.413022vw;font-size:0.644272vw;line-height:0.644272vw;color:#0b6cbf;left:52.018751vw;">Privacy Policy</span>
<span class="t" id="t143" style="top:50.407293vw;font-size:0.651043vw;line-height:0.651043vw;color:#5f6a6f;left:56.302084vw;">-</span>
<span class="t" id="t144" style="top:50.417709vw;font-size:0.638803vw;line-height:0.638803vw;color:#0b6cbf;left:56.625522vw;">Cookie Policy</span>
<span class="t" id="t145" style="top:50.407293vw;font-size:0.651043vw;line-height:0.651043vw;color:#5f6a6f;left:60.765626vw;">-</span>
<span class="t" id="t146" style="top:50.390366vw;font-size:0.670834vw;line-height:0.670834vw;color:#0b6cbf;left:61.073959vw;">Datadog Status →</span>
<span class="t" id="t147" style="top:50.400782vw;font-size:0.658595vw;line-height:0.658595vw;color:#5f6a6f;left:67.403647vw;">All Systems Operational</span>
<span class="t" id="t148" style="top:49.174220vw;font-size:1.015626vw;line-height:1.015626vw;color:#c9cccc;left:-24.619791vw;width:52.083334vw;text-align:center;transform:scaleX(1.180);transform-origin:center;">?</span>
<span class="t" id="t149" style="top:50.590886vw;font-size:0.670834vw;line-height:0.670834vw;color:#cdd0d0;left:0.739324vw;">Help</span>
</body></html>
